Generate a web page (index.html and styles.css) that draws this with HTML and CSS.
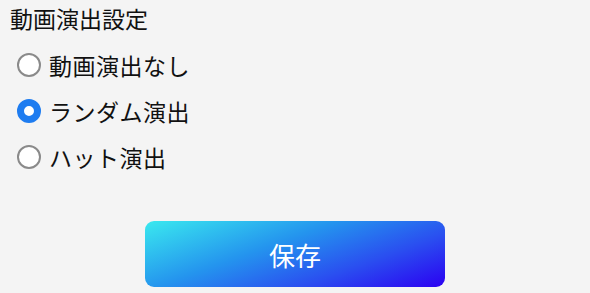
FILE: index.html
```html
<!DOCTYPE html>
<html lang="ja">
<head>
    <meta charset="UTF-8">
    <meta name="viewport" content="width=device-width, initial-scale=1.0">
    <title>動画演出設定</title>
    <link rel="stylesheet" href="styles.css">
</head>
<body>
    <div class="settings">
        <h2 class="section-title">動画演出設定</h2>

        <div class="radio-list">
            <label class="radio-item">
                <input type="radio" name="effect" value="none">
                <span class="radio-mark"></span>
                <span class="radio-text">動画演出なし</span>
            </label>
            <label class="radio-item">
                <input type="radio" name="effect" value="random" checked>
                <span class="radio-mark"></span>
                <span class="radio-text">ランダム演出</span>
            </label>
            <label class="radio-item">
                <input type="radio" name="effect" value="hot">
                <span class="radio-mark"></span>
                <span class="radio-text">ハット演出</span>
            </label>
        </div>

        <div class="actions">
            <button class="save-btn">保存</button>
        </div>
    </div>
</body>
</html>
```

FILE: styles.css
```css
* {
    margin: 0;
    padding: 0;
    box-sizing: border-box;
    font-family: "Noto Sans CJK JP", "Noto Sans", sans-serif;
}

html, body {
    background: #f4f4f4;
}

body {
    width: 590px;
    height: 293px;
    overflow: hidden;
}

.settings {
    padding: 4px 0 0 10px;
}

.section-title {
    font-size: 23px;
    font-weight: 400;
    color: #111;
    line-height: 28px;
}

.radio-list {
    display: flex;
    flex-direction: column;
    gap: 12px;
    margin-top: 16px;
    padding-left: 7px;
}

.radio-item {
    display: flex;
    align-items: center;
    gap: 8px;
    height: 34px;
    cursor: pointer;
}

.radio-item input {
    display: none;
}

.radio-mark {
    flex: none;
    width: 24px;
    height: 24px;
    border-radius: 50%;
    border: 2px solid #8a8a8a;
    background: #fff;
}

.radio-item input:checked + .radio-mark {
    border: 7px solid #1e7cf0;
    background: #fff;
}

.radio-text {
    font-size: 23px;
    color: #111;
    line-height: 34px;
    letter-spacing: 0.5px;
}

.actions {
    display: flex;
    justify-content: center;
    margin-top: 47px;
    padding-right: 10px;
}

.save-btn {
    width: 300px;
    height: 66px;
    border: none;
    border-radius: 9px;
    background: linear-gradient(160deg, #3ae9ef 0%, #2494ee 40%, #2a4ef0 70%, #2b00f2 100%);
    color: #fff;
    font-size: 26px;
    cursor: pointer;
}
```
